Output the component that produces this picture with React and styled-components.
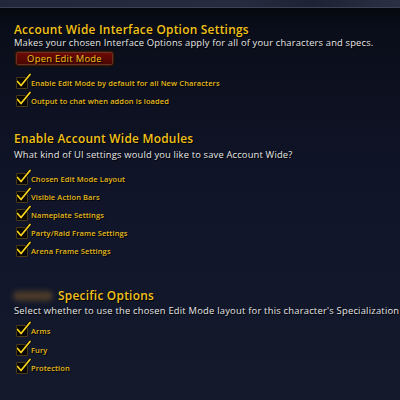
import React from "react";
import styled, { createGlobalStyle } from "styled-components";

const Global = createGlobalStyle`
  html, body { margin: 0; padding: 0; background: #0e1220; }
  * { box-sizing: border-box; }
`;

const Frame = styled.div`
  width: 400px;
  height: 400px;
  overflow: hidden;
  display: flex;
  flex-direction: column;
  background: linear-gradient(180deg, #04060b 0px, #0a0e1a 30px, #10152a 200px, #141a2b 400px);
  font-family: "Open Sans", "Liberation Sans", sans-serif;
`;

const TopBar = styled.div`
  height: 8px;
  flex: none;
  background: linear-gradient(90deg, #22283a 0%, #262c3e 60%, #1e2333 78%, #2a3042 100%);
  border-bottom: 1px solid #3c4356;
`;

const Content = styled.div`
  display: flex;
  flex-direction: column;
  padding: 14px 0 0 14px;
  white-space: nowrap;
`;

const Section = styled.section`
  display: flex;
  flex-direction: column;
  margin-bottom: ${(p) => p.$gap || 0}px;
`;

const Title = styled.h2`
  margin: 0;
  font-size: 11.9px;
  font-weight: 600;
  line-height: 14px;
  color: #f2c21c;
  letter-spacing: 0.25px;
  text-shadow: 1px 1px 0 #000;
`;

const Blurred = styled.span`
  display: inline-block;
  width: 40px;
  height: 10px;
  margin: 0 5px -1px -1px;
  border-radius: 5px;
  background: #4a3a2a;
  filter: blur(2.5px);
  vertical-align: baseline;
`;

const Desc = styled.p`
  margin: ${(p) => p.$top || 0}px 0 0;
  font-size: 9.4px;
  line-height: 13px;
  color: #e6e6e6;
  letter-spacing: ${(p) => p.$ls ?? 0.16}px;
  text-shadow: 1px 1px 0 #000;
`;

const RedButton = styled.button`
  align-self: flex-start;
  margin: 2px 0 0 1px;
  width: 99px;
  height: 15px;
  padding: 0;
  font-family: inherit;
  font-size: 9.4px;
  line-height: 13px;
  color: #f3c61e;
  background: linear-gradient(180deg, #720a06 0%, #5a0804 55%, #460603 100%);
  border: 1px solid #2a1a12;
  border-radius: 3px;
  box-shadow: inset 0 0 0 1px #6e3020, 0 0 0 1px #1a0e08;
  text-shadow: 1px 1px 0 #000;
  letter-spacing: 0.3px;
`;

const List = styled.div`
  display: flex;
  flex-direction: column;
  gap: ${(p) => p.$gap}px;
  margin-top: ${(p) => p.$top}px;
  padding-left: 2px;
`;

const Row = styled.label`
  display: flex;
  align-items: center;
  gap: 3px;
  height: 12px;
`;

const Box = styled.span`
  position: relative;
  width: 12px;
  height: 12px;
  flex: none;
  background: #0c0a06;
  border: 1px solid #4a3a1a;
  border-radius: 1px;
  box-shadow: inset 0 0 2px #000;
`;

const Check = styled.svg`
  position: absolute;
  left: -1px;
  top: -5px;
  width: 15px;
  height: 15px;
  overflow: visible;
`;

const Label = styled.span`
  font-size: 7.5px;
  font-weight: 600;
  color: #e6ba1c;
  letter-spacing: 0.1px;
  text-shadow: 1px 1px 0 #000;
`;

function CheckRow({ children }) {
  return (
    <Row>
      <Box>
        <Check viewBox="0 0 15 15">
          <path d="M1.5 8.5 L5 12.5 L14 1.5" fill="none" stroke="#000" strokeWidth="3" strokeLinecap="round" strokeLinejoin="round" />
          <path d="M1.5 8.5 L5 12.5 L14 1.5" fill="none" stroke="#f7d21e" strokeWidth="1.8" strokeLinecap="round" strokeLinejoin="round" />
        </Check>
      </Box>
      <Label>{children}</Label>
    </Row>
  );
}

export default function App() {
  return (
    <>
      <Global />
      <Frame>
        <TopBar />
        <Content>
          <Section $gap={24}>
            <Title>Account Wide Interface Option Settings</Title>
            <Desc>Makes your chosen Interface Options apply for all of your characters and specs.</Desc>
            <RedButton>Open Edit Mode</RedButton>
            <List $gap={6} $top={11}>
              <CheckRow>Enable Edit Mode by default for all New Characters</CheckRow>
              <CheckRow>Output to chat when addon is loaded</CheckRow>
            </List>
          </Section>
          <Section $gap={31}>
            <Title>Enable Account Wide Modules</Title>
            <Desc $top={3}>What kind of UI settings would you like to save Account Wide?</Desc>
            <List $gap={6} $top={12}>
              <CheckRow>Chosen Edit Mode Layout</CheckRow>
              <CheckRow>Visible Action Bars</CheckRow>
              <CheckRow>Nameplate Settings</CheckRow>
              <CheckRow>Party/Raid Frame Settings</CheckRow>
              <CheckRow>Arena Frame Settings</CheckRow>
            </List>
          </Section>
          <Section>
            <Title><Blurred />Specific Options</Title>
            <Desc $top={2} $ls={0.22}>Select whether to use the chosen Edit Mode layout for this character's Specialization</Desc>
            <List $gap={6.5} $top={8}>
              <CheckRow>Arms</CheckRow>
              <CheckRow>Fury</CheckRow>
              <CheckRow>Protection</CheckRow>
            </List>
          </Section>
        </Content>
      </Frame>
    </>
  );
}
